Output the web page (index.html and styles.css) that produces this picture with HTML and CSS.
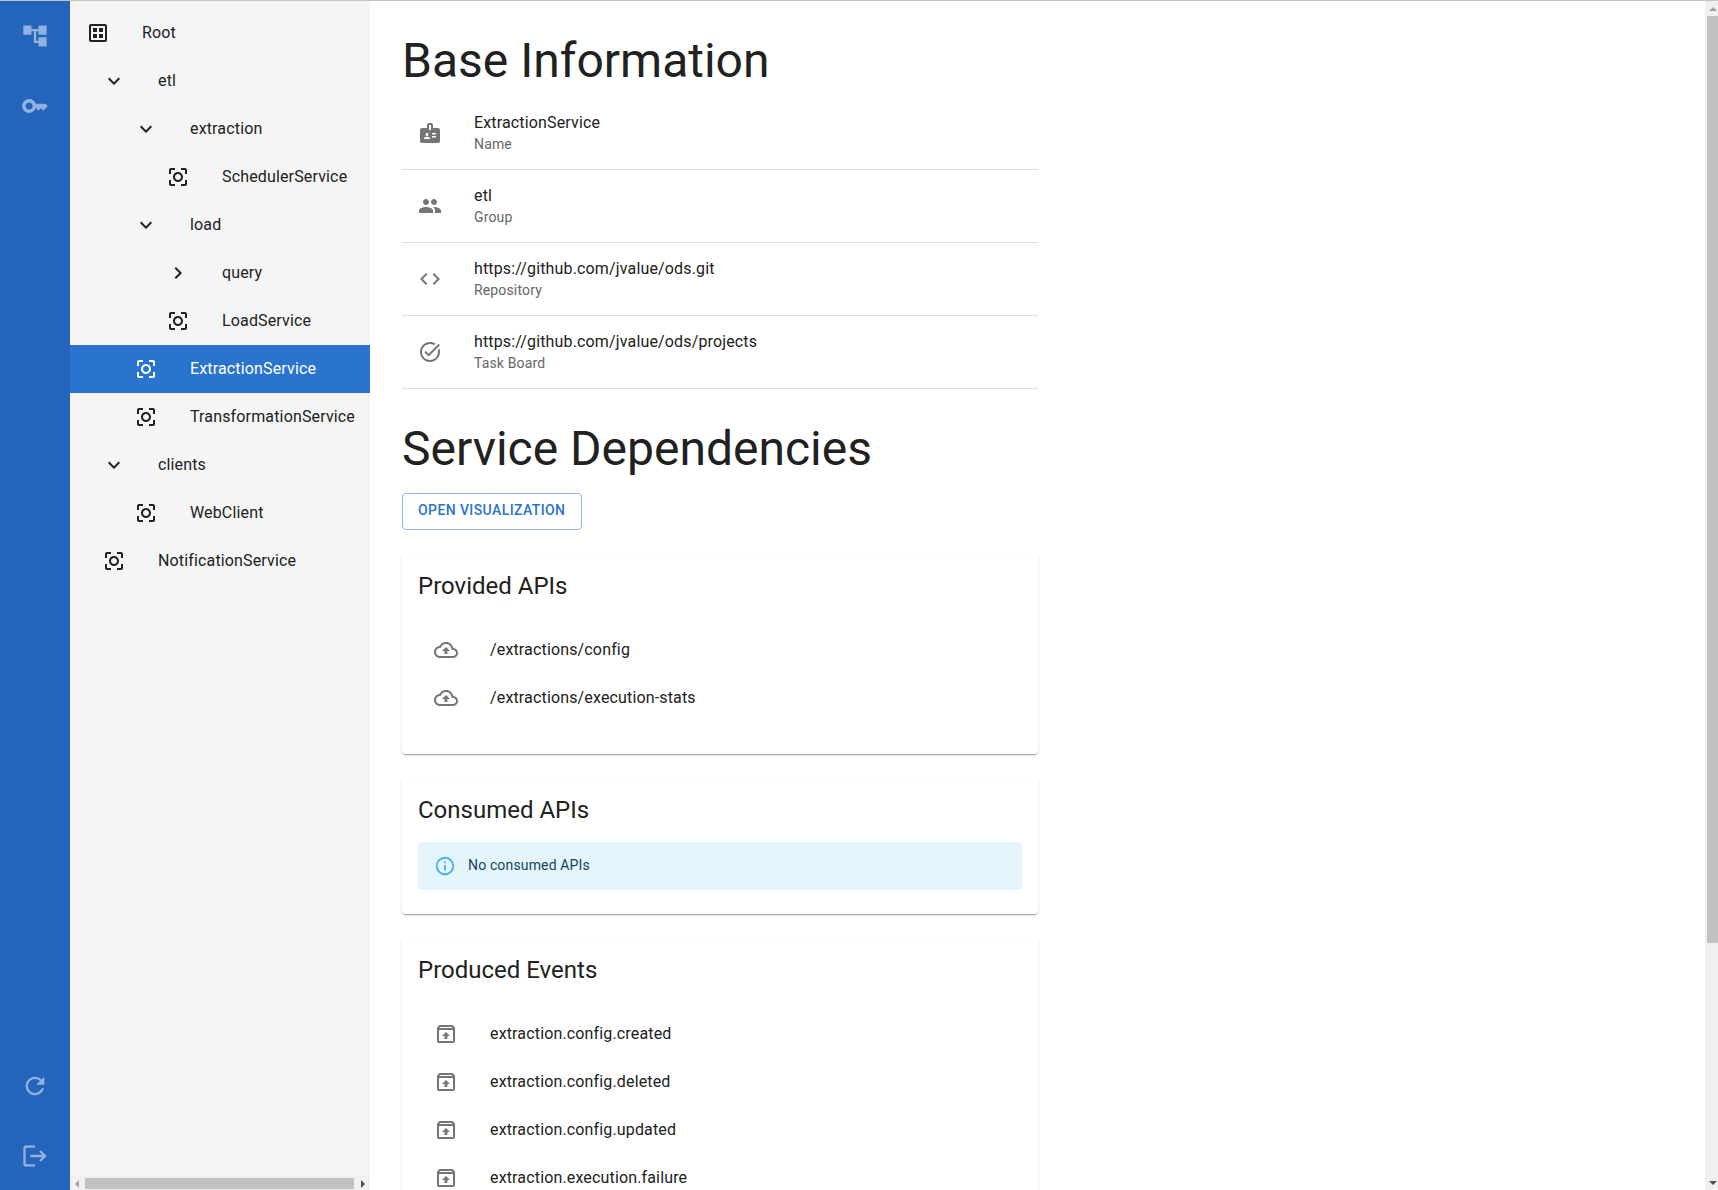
FILE: index.html
```html
<!DOCTYPE html>
<html lang="en">
<head>
<meta charset="utf-8">
<title>ExtractionService</title>
<link rel="stylesheet" href="styles.css">
</head>
<body>
<svg class="defs" aria-hidden="true">
  <symbol id="tree" viewBox="0 0 24 24"><path d="M22 11V3h-7v3H9V3H2v8h7V8h2v10h4v3h7v-8h-7v3h-2V8h2v3z"/></symbol>
  <symbol id="key" viewBox="0 0 24 24"><path d="M21 10h-8.35C11.83 7.67 9.61 6 7 6c-3.31 0-6 2.69-6 6s2.69 6 6 6c2.61 0 4.83-1.67 5.65-4H13l2 2 2-2 2 2 4-4.04zM7 15c-1.65 0-3-1.35-3-3s1.35-3 3-3 3 1.35 3 3-1.35 3-3 3z"/></symbol>
  <symbol id="refresh" viewBox="0 0 24 24"><path d="M17.65 6.35C16.2 4.9 14.21 4 12 4c-4.42 0-7.99 3.58-7.99 8s3.57 8 7.99 8c3.73 0 6.84-2.55 7.73-6h-2.08c-.82 2.33-3.04 4-5.65 4-3.31 0-6-2.69-6-6s2.69-6 6-6c1.66 0 3.14.69 4.22 1.78L13 11h7V4z"/></symbol>
  <symbol id="logout" viewBox="0 0 24 24"><path d="m17 7-1.41 1.41L18.17 11H8v2h10.17l-2.58 2.58L17 17l5-5zM4 5h8V3H4c-1.1 0-2 .9-2 2v14c0 1.1.9 2 2 2h8v-2H4z"/></symbol>
  <symbol id="root" viewBox="0 0 24 24"><path d="M19 3H5c-1.1 0-2 .9-2 2v14c0 1.1.9 2 2 2h14c1.1 0 2-.9 2-2V5c0-1.1-.9-2-2-2zm0 16H5V5h14zM7 7h4v4H7zM13 7h4v4h-4zM7 13h4v4H7zM13 13h4v4h-4z"/></symbol>
  <symbol id="down" viewBox="0 0 24 24"><path d="M16.59 8.59 12 13.17 7.41 8.59 6 10l6 6 6-6z"/></symbol>
  <symbol id="right" viewBox="0 0 24 24"><path d="M10 6 8.59 7.41 13.17 12l-4.58 4.59L10 18l6-6z"/></symbol>
  <symbol id="service" viewBox="0 0 24 24"><path d="M5 15H3v4c0 1.1.9 2 2 2h4v-2H5zM5 5h4V3H5c-1.1 0-2 .9-2 2v4h2zm14-2h-4v2h4v4h2V5c0-1.1-.9-2-2-2zm0 16h-4v2h4c1.1 0 2-.9 2-2v-4h-2zM12 7c-2.76 0-5 2.24-5 5s2.24 5 5 5 5-2.24 5-5-2.24-5-5-5zm0 8c-1.65 0-3-1.35-3-3s1.35-3 3-3 3 1.35 3 3-1.35 3-3 3z"/></symbol>
  <symbol id="badge" viewBox="0 0 24 24"><path d="M20 7h-5V4c0-1.100-.9-2-2-2h-2c-1.100 0-2 .9-2 2v3H4c-1.100 0-2 .9-2 2v11c0 1.100.9 2 2 2h16c1.100 0 2-.9 2-2V9c0-1.100-.9-2-2-2zM9 12c.83 0 1.500.67 1.500 1.500S9.830 15 9 15s-1.500-.67-1.500-1.500S8.170 12 9 12zm3 6H6v-.75c0-1 2-1.500 3-1.500s3 .5 3 1.500V18zm1-9h-2V4h2v5zm5 7.500h-4V15h4v1.500zm0-3h-4V12h4v1.500z"/></symbol>
  <symbol id="people" viewBox="0 0 24 24"><path d="M16 11c1.660 0 2.990-1.340 2.990-3S17.660 5 16 5s-3 1.340-3 3 1.340 3 3 3zm-8 0c1.660 0 2.990-1.340 2.990-3S9.660 5 8 5 5 6.340 5 8s1.340 3 3 3zm0 2c-2.330 0-7 1.170-7 3.500V19h14v-2.500c0-2.330-4.670-3.500-7-3.500zm8 0c-.29 0-.62.02-.97.05 1.160.84 1.970 1.970 1.970 3.450V19h6v-2.500c0-2.330-4.670-3.500-7-3.500z"/></symbol>
  <symbol id="code" viewBox="0 0 24 24"><path d="M9.4 16.6 4.8 12l4.6-4.6L8 6l-6 6 6 6zm5.2 0 4.6-4.600-4.600-4.600L16 6l6 6-6 6z"/></symbol>
  <symbol id="task" viewBox="0 0 24 24"><path d="M22 5.180 10.590 16.600l-4.240-4.240 1.410-1.410 2.830 2.830 10-10zM19.790 10.220c.13.57.21 1.170.21 1.780 0 4.420-3.580 8-8 8s-8-3.580-8-8 3.580-8 8-8c1.580 0 3.040.46 4.280 1.250l1.440-1.440C16.100 2.670 14.130 2 12 2 6.480 2 2 6.480 2 12s4.480 10 10 10 10-4.480 10-10c0-1.190-.22-2.330-.6-3.390z"/></symbol>
  <symbol id="cloud" viewBox="0 0 24 24"><path d="M19.35 10.04C18.67 6.59 15.64 4 12 4 9.11 4 6.6 5.64 5.35 8.04 2.34 8.36 0 10.91 0 14c0 3.31 2.69 6 6 6h13c2.76 0 5-2.24 5-5 0-2.64-2.05-4.78-4.65-4.96zM19 18H6c-2.21 0-4-1.79-4-4 0-2.05 1.53-3.76 3.56-3.97l1.07-.11.5-.95C8.08 7.14 9.94 6 12 6c2.62 0 4.88 1.86 5.39 4.43l.3 1.5 1.53.11c1.56.1 2.78 1.41 2.78 2.96 0 1.65-1.35 3-3 3zM8 13h2.55v3h2.9v-3H16l-4-4z"/></symbol>
  <symbol id="event" viewBox="0 0 24 24"><path d="m20.55 5.22-1.39-1.68C18.88 3.21 18.47 3 18 3H6c-.47 0-.88.21-1.15.55L3.46 5.22C3.17 5.57 3 6.01 3 6.5V19c0 1.1.89 2 2 2h14c1.1 0 2-.9 2-2V6.5c0-.49-.17-.93-.45-1.28zM6.24 5h11.52l.83 1H5.42zM5 19V8h14v11zm3-5h2.550v3h2.900v-3H16l-4-4z"/></symbol>
  <symbol id="info" viewBox="0 0 24 24"><path d="M11 9h2V7h-2zM12 20c-4.410 0-8-3.590-8-8s3.590-8 8-8 8 3.590 8 8-3.590 8-8 8zm0-18a10 10 0 1 0 0 20 10 10 0 0 0 0-20zM11 17h2v-6h-2z"/></symbol>
  <symbol id="arrow-left" viewBox="0 0 4 8"><path d="M4 0v8L0 4z"/></symbol>
  <symbol id="arrow-right" viewBox="0 0 4 8"><path d="M0 0v8l4-4z"/></symbol>
  <symbol id="arrow-up" viewBox="0 0 8 4"><path d="M0 4h8L4 0z"/></symbol>
  <symbol id="arrow-down" viewBox="0 0 8 4"><path d="M0 0h8L4 4z"/></symbol>
</svg>

<div class="app">
  <nav class="rail">
    <a class="rail-item"><svg><use href="#tree"/></svg></a>
    <a class="rail-item"><svg><use href="#key"/></svg></a>
    <span class="rail-space"></span>
    <a class="rail-item"><svg><use href="#refresh"/></svg></a>
    <a class="rail-item"><svg><use href="#logout"/></svg></a>
  </nav>

  <aside class="explorer">
    <ul class="tree">
      <li class="node"><svg class="icon"><use href="#root"/></svg>Root</li>
      <li class="node level-1"><svg class="icon"><use href="#down"/></svg>etl</li>
      <li class="node level-2"><svg class="icon"><use href="#down"/></svg>extraction</li>
      <li class="node level-3"><svg class="icon"><use href="#service"/></svg>SchedulerService</li>
      <li class="node level-2"><svg class="icon"><use href="#down"/></svg>load</li>
      <li class="node level-3"><svg class="icon"><use href="#right"/></svg>query</li>
      <li class="node level-3"><svg class="icon"><use href="#service"/></svg>LoadService</li>
      <li class="node level-2 selected"><svg class="icon"><use href="#service"/></svg>ExtractionService</li>
      <li class="node level-2"><svg class="icon"><use href="#service"/></svg>TransformationService</li>
      <li class="node level-1"><svg class="icon"><use href="#down"/></svg>clients</li>
      <li class="node level-2"><svg class="icon"><use href="#service"/></svg>WebClient</li>
      <li class="node level-1"><svg class="icon"><use href="#service"/></svg>NotificationService</li>
    </ul>
    <div class="hscroll">
      <svg class="arrow-x dim"><use href="#arrow-left"/></svg>
      <span class="hthumb"></span>
      <svg class="arrow-x"><use href="#arrow-right"/></svg>
    </div>
  </aside>

  <main class="content">
    <div class="column">
      <h1 class="title">Base Information</h1>
      <ul class="facts">
        <li class="fact"><svg class="icon"><use href="#badge"/></svg><div><p class="value">ExtractionService</p><p class="label">Name</p></div></li>
        <li class="fact"><svg class="icon"><use href="#people"/></svg><div><p class="value">etl</p><p class="label">Group</p></div></li>
        <li class="fact"><svg class="icon"><use href="#code"/></svg><div><p class="value">https://github.com/jvalue/ods.git</p><p class="label">Repository</p></div></li>
        <li class="fact"><svg class="icon"><use href="#task"/></svg><div><p class="value">https://github.com/jvalue/ods/projects</p><p class="label">Task Board</p></div></li>
      </ul>

      <h1 class="title">Service Dependencies</h1>
      <button class="open">OPEN VISUALIZATION</button>

      <section class="card">
        <h2 class="card-title">Provided APIs</h2>
        <ul class="items">
          <li class="item"><svg class="icon"><use href="#cloud"/></svg>/extractions/config</li>
          <li class="item"><svg class="icon"><use href="#cloud"/></svg>/extractions/execution-stats</li>
        </ul>
      </section>

      <section class="card">
        <h2 class="card-title">Consumed APIs</h2>
        <div class="alert"><svg class="alert-icon"><use href="#info"/></svg><p class="alert-text">No consumed APIs</p></div>
      </section>

      <section class="card">
        <h2 class="card-title">Produced Events</h2>
        <ul class="items">
          <li class="item"><svg class="icon"><use href="#event"/></svg>extraction.config.created</li>
          <li class="item"><svg class="icon"><use href="#event"/></svg>extraction.config.deleted</li>
          <li class="item"><svg class="icon"><use href="#event"/></svg>extraction.config.updated</li>
          <li class="item"><svg class="icon"><use href="#event"/></svg>extraction.execution.failure</li>
        </ul>
      </section>
    </div>
  </main>

  <div class="vscroll">
    <svg class="arrow-y dim"><use href="#arrow-up"/></svg>
    <span class="vthumb"></span>
    <svg class="arrow-y"><use href="#arrow-down"/></svg>
  </div>
</div>
</body>
</html>
```

FILE: styles.css
```css
* { box-sizing: border-box; }

body {
  margin: 0;
  height: 100vh;
  overflow: hidden;
  font: 400 16px/24px Roboto, sans-serif;
  letter-spacing: 0.00938em;
  color: #212121;
  background: #fff;
  -webkit-font-smoothing: antialiased;
}

h1, h2, p, ul { margin: 0; padding: 0; }
ul { list-style: none; }
svg { display: block; flex: none; fill: currentColor; }
.defs { display: none; }

.app {
  display: flex;
  height: 100vh;
  border-top: 1px solid #c8c3bc;
}

/* Navigation rail */
.rail {
  display: flex;
  flex-direction: column;
  flex: none;
  width: 70px;
  height: calc(100% + 1px);
  background: #2365bb;
  color: #92b1df;
}
.rail-item {
  display: grid;
  place-items: center;
  height: 70px;
}
.rail-item svg { width: 28px; height: 28px; }
.rail-space { flex: 1; }

/* Explorer tree */
.explorer {
  display: flex;
  flex-direction: column;
  flex: none;
  width: 300px;
  background: #f5f5f5;
}
.tree { flex: 1; padding-top: 8px; }
.node {
  display: flex;
  align-items: center;
  gap: 32px;
  height: 48px;
  padding-left: 16px;
  white-space: nowrap;
}
.level-1 { padding-left: 32px; }
.level-2 { padding-left: 64px; }
.level-3 { padding-left: 96px; }
.selected { background: #2a74d0; color: #fff; }
.icon { width: 24px; height: 24px; }

/* Scrollbars */
.hscroll {
  display: flex;
  align-items: center;
  height: 14px;
  padding: 1px 5px 0;
  background: #f0f0f0;
  color: #505050;
}
.hthumb { width: 269px; height: 11px; margin: 0 7px 0 6px; background: #c1c1c1; }
.arrow-x { width: 4px; height: 8px; }
.dim { color: #a3a3a3; }
.vscroll {
  display: flex;
  flex-direction: column;
  flex: none;
  width: 13px;
  padding: 6px 0 5px 2px;
  background: #f0f0f0;
  color: #505050;
}
.vthumb { height: 927px; margin: 5px 0 auto; background: #c1c1c1; }
.arrow-y { width: 8px; height: 4px; margin-left: 2px; }

/* Main content */
.content { flex: 1; overflow: hidden; }
.column { width: 700px; padding: 32px; }
.title {
  font-size: 48px;
  font-weight: 400;
  line-height: 56px;
  letter-spacing: 0;
}
.facts { padding: 8px 0; margin-bottom: 24px; }
.fact {
  display: flex;
  align-items: center;
  gap: 32px;
  height: 73px;
  padding-left: 16px;
  border-bottom: 1px solid #e0e0e0;
}
.fact .icon, .item .icon { color: #757575; }
.label {
  padding-bottom: 2px;
  font-size: 14px;
  line-height: 18px;
  letter-spacing: 0.01071em;
  color: #666;
}
.open {
  display: block;
  width: 180px;
  margin-top: 16px;
  padding: 4px 15px 6px;
  border: 1px solid #94b9e8;
  border-radius: 4px;
  background: none;
  font: 500 14px/24.5px Roboto, sans-serif;
  letter-spacing: 0.02857em;
  text-align: left;
  white-space: nowrap;
  color: #2a74d0;
}
.card {
  margin-top: 24px;
  padding: 16px 16px 24px;
  border-radius: 4px;
  background: #fff;
  box-shadow: 0 2px 1px -1px rgba(0, 0, 0, .2), 0 1px 1px rgba(0, 0, 0, .14), 0 1px 3px rgba(0, 0, 0, .12);
}
.card-title {
  margin-bottom: 16px;
  font-size: 24px;
  font-weight: 400;
  line-height: 32px;
  letter-spacing: 0;
}
.items { padding: 8px 0; }
.item {
  display: flex;
  align-items: center;
  gap: 32px;
  height: 48px;
  padding-left: 16px;
}
.alert {
  display: flex;
  align-items: center;
  gap: 12px;
  height: 48px;
  padding: 0 16px;
  border-radius: 4px;
  background: #e4f5fc;
  font-size: 14px;
  line-height: 20px;
  letter-spacing: 0.01071em;
  color: #15445f;
}
.alert-text { padding-bottom: 2px; }
.alert-icon { width: 22px; height: 22px; color: #42aff5; }
```
